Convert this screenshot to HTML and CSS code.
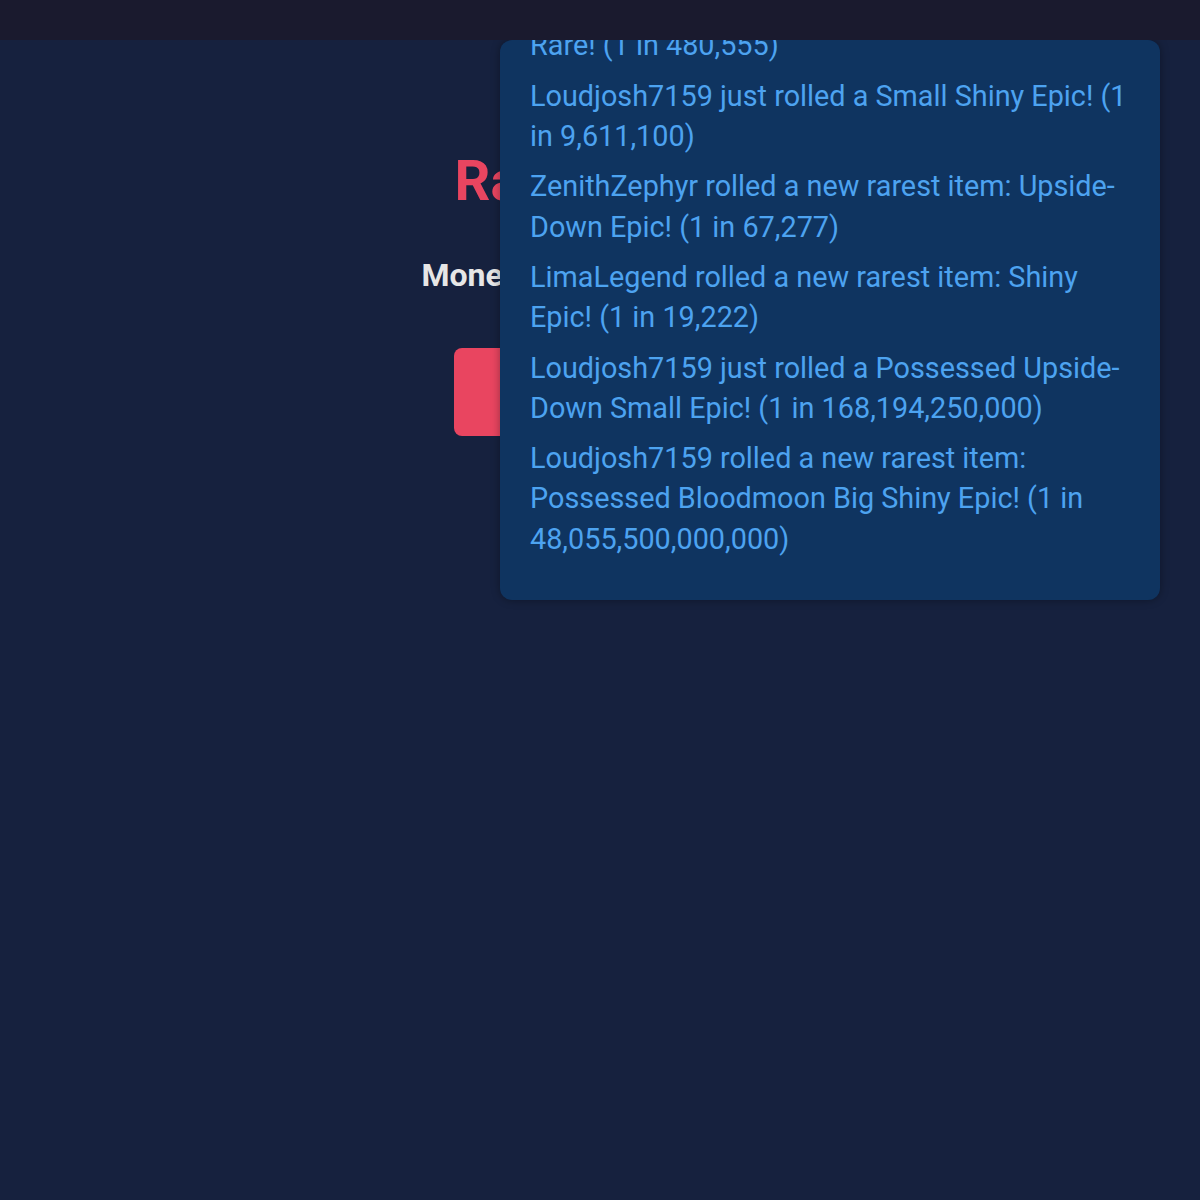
FILE: index.html
```html
<!DOCTYPE html>
<html lang="en">
<head>
<meta charset="utf-8">
<title>Rarity RNG</title>
<link rel="stylesheet" href="styles.css">
</head>
<body>
<header class="topbar"></header>
<main class="game">
  <h1 class="title">Rarity RNG!</h1>
  <p class="money">Money: $125 · Rolls: 242</p>
  <button class="roll-btn">Roll!</button>
</main>
<aside class="feed">
  <ul class="feed-list">
    <li class="feed-item">StarGazer99 rolled a new rarest item: Big Shiny Rare! (1 in 480,555)</li>
    <li class="feed-item">Loudjosh7159 just rolled a Small Shiny Epic! (1 in 9,611,100)</li>
    <li class="feed-item">ZenithZephyr rolled a new rarest item: Upside-Down Epic! (1 in 67,277)</li>
    <li class="feed-item">LimaLegend rolled a new rarest item: Shiny Epic! (1 in 19,222)</li>
    <li class="feed-item">Loudjosh7159 just rolled a Possessed Upside-Down Small Epic! (1 in 168,194,250,000)</li>
    <li class="feed-item">Loudjosh7159 rolled a new rarest item: Possessed Bloodmoon Big Shiny Epic! (1 in 48,055,500,000,000)</li>
  </ul>
</aside>
</body>
</html>
```
FILE: styles.css
```css
html, body {
  margin: 0;
  padding: 0;
}
body {
  background: #16213e;
  font-family: Roboto, "Noto Sans", sans-serif;
  min-height: 1200px;
  overflow: hidden;
}
.topbar {
  position: fixed;
  top: 0;
  left: 0;
  right: 0;
  height: 40px;
  background: #1a1a2e;
  z-index: 10;
}
.game {
  padding-top: 40px;
  display: flex;
  flex-direction: column;
  align-items: center;
}
.title {
  margin: 108px 0 0;
  font-size: 56px;
  font-weight: 700;
  color: #e94560;
  line-height: 1.2;
  white-space: nowrap;
}
.money {
  margin: 41px 0 0;
  font-size: 32px;
  font-weight: 700;
  color: #e6e6e6;
  line-height: 1.2;
  white-space: nowrap;
}
.roll-btn {
  margin-top: 53px;
  width: 292px;
  height: 88px;
  border: none;
  border-radius: 8px;
  background: #e94560;
  color: #ffffff;
  font-family: Roboto, sans-serif;
  font-size: 32px;
  font-weight: 700;
}
.feed {
  position: absolute;
  top: 40px;
  left: 500px;
  width: 660px;
  height: 560px;
  box-sizing: border-box;
  background: #0f3460;
  border-radius: 12px;
  box-shadow: 0 0 8px rgba(0, 0, 0, 0.35);
  padding: 0 30px;
}
.feed-list {
  list-style: none;
  margin: -55px 0 0;
  padding: 0;
}
.feed-item {
  font-size: 28.8px;
  line-height: 1.4;
  color: #4da3f0;
  margin-bottom: 10px;
}
```
